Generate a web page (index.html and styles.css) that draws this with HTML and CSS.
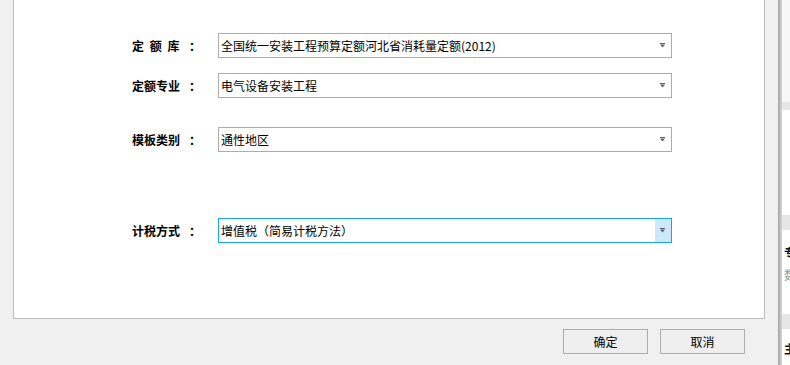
FILE: index.html
```html
<!DOCTYPE html>
<html lang="zh-CN">
<head>
<meta charset="utf-8">
<title>模板设置</title>
<link rel="stylesheet" href="styles.css">
</head>
<body>
<div class="screen">
  <div class="main">
    <div class="panel">
      <div class="form">
        <div class="row row-lib">
          <div class="label"><span class="label-text spaced">定 额 库</span><span class="colon">：</span></div>
          <div class="combo">
            <span class="combo-text">全国统一安装工程预算定额河北省消耗量定额(2012)</span>
            <span class="combo-btn"><svg width="7" height="5" viewBox="0 0 7 5"><rect x="1" y="0" width="5" height="1" fill="#5f5f6c"/><polygon points="1,1.6 6,1.6 3.5,4.6" fill="#5f5f6c"/></svg></span>
          </div>
        </div>
        <div class="row row-major">
          <div class="label"><span class="label-text">定额专业</span><span class="colon">：</span></div>
          <div class="combo">
            <span class="combo-text">电气设备安装工程</span>
            <span class="combo-btn"><svg width="7" height="5" viewBox="0 0 7 5"><rect x="1" y="0" width="5" height="1" fill="#5f5f6c"/><polygon points="1,1.6 6,1.6 3.5,4.6" fill="#5f5f6c"/></svg></span>
          </div>
        </div>
        <div class="row row-tpl">
          <div class="label"><span class="label-text">模板类别</span><span class="colon">：</span></div>
          <div class="combo">
            <span class="combo-text">通性地区</span>
            <span class="combo-btn"><svg width="7" height="5" viewBox="0 0 7 5"><rect x="1" y="0" width="5" height="1" fill="#5f5f6c"/><polygon points="1,1.6 6,1.6 3.5,4.6" fill="#5f5f6c"/></svg></span>
          </div>
        </div>
        <div class="row row-tax">
          <div class="label"><span class="label-text">计税方式</span><span class="colon">：</span></div>
          <div class="combo combo-focus">
            <span class="combo-text">增值税（简易计税方法）</span>
            <span class="combo-btn"><svg width="7" height="5" viewBox="0 0 7 5"><rect x="1" y="0" width="5" height="1" fill="#5f5f6c"/><polygon points="1,1.6 6,1.6 3.5,4.6" fill="#5f5f6c"/></svg></span>
          </div>
        </div>
      </div>
    </div>
    <div class="actions">
      <button class="btn">确定</button>
      <button class="btn">取消</button>
    </div>
  </div>
  <div class="divider"></div>
  <div class="side">
    <div class="side-block side-top"></div>
    <div class="side-band"></div>
    <div class="side-block side-mid"></div>
    <div class="side-band side-band-tall"></div>
    <div class="side-block side-list">
      <span class="side-char side-char-dark">专</span>
      <span class="side-char side-char-gray">数</span>
    </div>
    <div class="side-band side-band-tall"></div>
    <div class="side-block side-bottom">
      <span class="side-char side-char-dark">主</span>
    </div>
  </div>
</div>
</body>
</html>
```

FILE: styles.css
```css
* {
  box-sizing: border-box;
}

html, body {
  margin: 0;
  padding: 0;
}

body {
  background: #f0f0f0;
  font-family: "Noto Sans CJK SC", "Liberation Sans", sans-serif;
  font-size: 12px;
  color: #000;
}

.screen {
  display: flex;
  width: 790px;
  height: 365px;
  overflow: hidden;
}

.main {
  width: 778px;
  padding-left: 13px;
  padding-right: 13px;
  display: flex;
  flex-direction: column;
}

.panel {
  width: 752px;
  height: 319px;
  background: #fff;
  border: 1px solid #bcbcbc;
  border-top: none;
}

.form {
  display: flex;
  flex-direction: column;
  padding-left: 118px;
}

.row {
  display: flex;
  align-items: center;
  height: 25px;
}

.row-lib { margin-top: 33px; }
.row-major { margin-top: 15px; }
.row-tpl { margin-top: 29px; }
.row-tax { margin-top: 66px; }

.label {
  width: 86px;
  display: flex;
  align-items: center;
  font-weight: bold;
  line-height: 14px;
}

.label-text {
  width: 48px;
  white-space: pre;
}

.spaced {
  word-spacing: 3px;
}

.colon {
  margin-left: 9px;
}

.combo {
  width: 454px;
  height: 25px;
  border: 1px solid #acacac;
  background: #fff;
  display: flex;
  align-items: stretch;
}

.combo-text {
  flex: 1;
  padding-left: 2px;
  display: flex;
  align-items: center;
  line-height: 14px;
  white-space: nowrap;
}

.combo-btn {
  width: 16px;
  display: flex;
  align-items: center;
  justify-content: center;
  padding-right: 1px;
}

.combo-focus {
  border-color: #17a3e6;
}

.combo-focus .combo-btn {
  background: #cce8fb;
}

.actions {
  display: flex;
  justify-content: flex-end;
  gap: 12px;
  margin-top: 10px;
  padding-right: 20px;
}

.btn {
  width: 85px;
  height: 25px;
  border: 1px solid #adadad;
  background: #efefef;
  font-family: "Noto Sans CJK SC", "Liberation Sans", sans-serif;
  font-size: 12px;
  color: #000;
  padding: 0;
  line-height: 14px;
}

.divider {
  width: 4px;
  background: linear-gradient(to right, #a4a4a4, #bcbcbc, #d8d8d8);
}

.side {
  width: 8px;
  display: flex;
  flex-direction: column;
  overflow: hidden;
}

.side-block {
  background: #fff;
  display: flex;
  flex-direction: column;
  padding-left: 2px;
}

.side-top {
  height: 102px;
  background: #f7f7f7;
}

.side-band {
  height: 8px;
  background: #e6e6e6;
}

.side-band-tall {
  height: 15px;
}

.side-mid {
  height: 105px;
}

.side-list {
  height: 84px;
  padding-top: 16px;
  gap: 8px;
}

.side-bottom {
  flex: 1;
  padding-top: 13px;
}

.side-char {
  font-size: 12px;
  line-height: 14px;
  white-space: nowrap;
}

.side-char-dark {
  color: #111;
  font-weight: bold;
}

.side-char-gray {
  color: #9a9a9a;
}
```
